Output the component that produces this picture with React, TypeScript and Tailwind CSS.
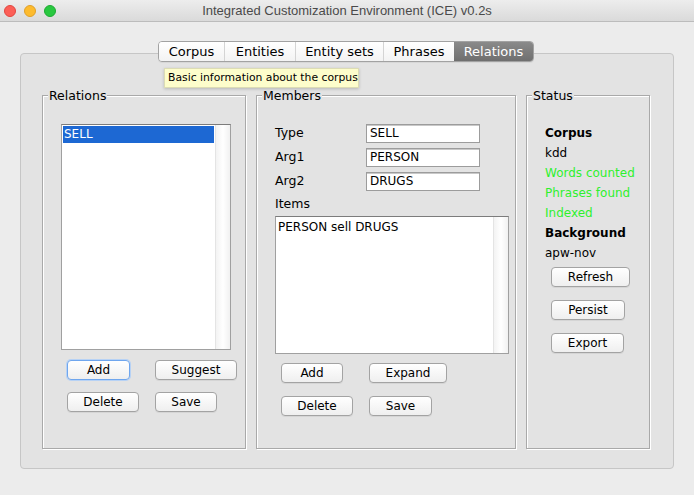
import React from "react";

function Btn({ label, w, focused }: { label: string; w: string; focused?: boolean }) {
  return (
    <div
      className={
        "h-[20px] rounded-[4px] flex items-center justify-center text-[12px] text-black bg-gradient-to-b from-white to-[#efefef] " +
        w +
        (focused
          ? " border border-[#6fa6ee] shadow-[0_0_0_1px_#b7d2f5]"
          : " border border-[#a3a3a3] shadow-[0_1px_0_rgba(0,0,0,0.06)]")
      }
    >
      {label}
    </div>
  );
}

function Panel({ title, w, children }: { title: string; w: string; children: React.ReactNode }) {
  return (
    <div
      className={
        "relative h-[354px] border border-[#a9a9a9] shadow-[inset_1px_1px_0_#ffffff,1px_1px_0_#ffffff] " + w
      }
    >
      <div className="absolute left-[5px] top-[-8px] bg-[#e3e3e3] px-px text-[12.5px] leading-[16px] text-black">
        {title}
      </div>
      {children}
    </div>
  );
}

function ScrollTrack() {
  return (
    <div className="w-[15px] border-l border-[#e4e4e4] bg-gradient-to-r from-[#f3f3f3] via-white to-[#f1f1f1]" />
  );
}

function Field({ value }: { value: string }) {
  return (
    <div className="w-[114px] h-[19px] bg-white border border-[#9c9c9c] shadow-[inset_0_1px_0_#c8c8c8] pl-[3px] text-[12px] leading-[17px] text-black">
      {value}
    </div>
  );
}

export default function App() {
  const tabs = [
    { t: "Corpus", w: "w-[65px]" },
    { t: "Entities", w: "w-[71px]" },
    { t: "Entity sets", w: "w-[88px]" },
    { t: "Phrases", w: "w-[71px]" },
  ];
  return (
    <div className="relative w-[694px] h-[495px] overflow-hidden bg-[#ececec] font-['DejaVu_Sans',sans-serif]">
      {/* Title bar */}
      <div className="h-[22px] grid grid-cols-[1fr_auto_1fr] items-center border-b border-[#bcbcbc] bg-gradient-to-b from-[#ededed] to-[#dadada]">
        <div className="flex items-center gap-[8px] pl-[4px]">
          <div className="w-[12px] h-[12px] rounded-full bg-[#fc5f57] border border-[#e2463f]" />
          <div className="w-[12px] h-[12px] rounded-full bg-[#fdbb2e] border border-[#e0a028]" />
          <div className="w-[12px] h-[12px] rounded-full bg-[#29c840] border border-[#1eaa33]" />
        </div>
        <div className="font-['Liberation_Sans',sans-serif] text-[13px] text-[#4a4a4a] leading-[20px]">
          Integrated Customization Environment (ICE) v0.2s
        </div>
        <div />
      </div>

      {/* Tabs */}
      <div className="relative z-10 mt-[19px] ml-[158px] flex w-fit h-[21px] rounded-[4px] border border-[#a2a2a2] overflow-hidden shadow-[0_1px_0_rgba(0,0,0,0.05)]">
        {tabs.map((tab, i) => (
          <div
            key={tab.t}
            className={
              "flex items-center justify-center text-[13px] text-black bg-gradient-to-b from-white to-[#f3f3f3] " +
              tab.w +
              (i > 0 ? " border-l border-[#d4d4d4]" : "")
            }
          >
            {tab.t}
          </div>
        ))}
        <div className="w-[79px] flex items-center justify-center text-[13px] text-white bg-gradient-to-b from-[#8a8a8a] to-[#6f6f6f]">
          Relations
        </div>
      </div>

      {/* Pane */}
      <div className="-mt-[9px] mx-[20px] h-[416px] rounded-[4px] border border-[#c6c6c6] bg-[#e3e3e3] pt-[41px] pl-[21px]">
        <div className="flex gap-[10px]">
          <Panel title="Relations" w="w-[204px]">
            <div className="pl-[18px] pt-[28px]">
              <div className="w-[170px] h-[226px] bg-white border border-[#a0a0a0] border-t-[#7c7c7c] flex">
                <div className="flex-1 p-px">
                  <div className="h-[17px] bg-[#1d68d3] text-white text-[12px] leading-[17px] pl-px">SELL</div>
                </div>
                <ScrollTrack />
              </div>
              <div className="mt-[10px] ml-[6px] grid grid-cols-[88px_auto] gap-y-[12px]">
                <Btn label="Add" w="w-[63px]" focused />
                <Btn label="Suggest" w="w-[82px]" />
                <Btn label="Delete" w="w-[72px]" />
                <Btn label="Save" w="w-[62px]" />
              </div>
            </div>
          </Panel>

          <Panel title="Members" w="w-[260px]">
            <div className="pl-[18px] pt-[28px]">
              <div className="grid grid-cols-[91px_auto] gap-y-[5px] items-center">
                <div className="text-[12.5px] text-black">Type</div>
                <Field value="SELL" />
                <div className="text-[12.5px] text-black">Arg1</div>
                <Field value="PERSON" />
                <div className="text-[12.5px] text-black">Arg2</div>
                <Field value="DRUGS" />
              </div>
              <div className="mt-[5px] text-[12.5px] leading-[16px] text-black">Items</div>
              <div className="mt-[4px] w-[234px] h-[138px] bg-white border border-[#a0a0a0] border-t-[#7c7c7c] flex">
                <div className="flex-1 pl-[2px] pt-[2px] text-[12px] leading-[16px] text-black">PERSON sell DRUGS</div>
                <ScrollTrack />
              </div>
              <div className="mt-[9px] ml-[6px] grid grid-cols-[88px_auto] gap-y-[13px]">
                <Btn label="Add" w="w-[62px]" />
                <Btn label="Expand" w="w-[78px]" />
                <Btn label="Delete" w="w-[72px]" />
                <Btn label="Save" w="w-[63px]" />
              </div>
            </div>
          </Panel>

          <Panel title="Status" w="w-[124px]">
            <div className="pl-[18px] pt-[27px] text-[12px] leading-[20px]">
              <div className="font-bold text-black">Corpus</div>
              <div className="text-black">kdd</div>
              <div className="text-[#2ef02e]">Words counted</div>
              <div className="text-[#2ef02e]">Phrases found</div>
              <div className="text-[#2ef02e]">Indexed</div>
              <div className="font-bold text-black">Background</div>
              <div className="text-black">apw-nov</div>
              <div className="mt-[4px] ml-[6px] flex flex-col gap-[13px]">
                <Btn label="Refresh" w="w-[79px]" />
                <Btn label="Persist" w="w-[74px]" />
                <Btn label="Export" w="w-[73px]" />
              </div>
            </div>
          </Panel>
        </div>
      </div>

      {/* Tooltip */}
      <div className="absolute left-[164px] top-[68px] w-[195px] h-[20px] whitespace-nowrap bg-[#fdfdcb] border border-[#dcdcb4] shadow-[0_1px_3px_rgba(0,0,0,0.2)] pl-[3px] text-[10.8px] leading-[18px] text-black">
        Basic information about the corpus
      </div>
    </div>
  );
}
